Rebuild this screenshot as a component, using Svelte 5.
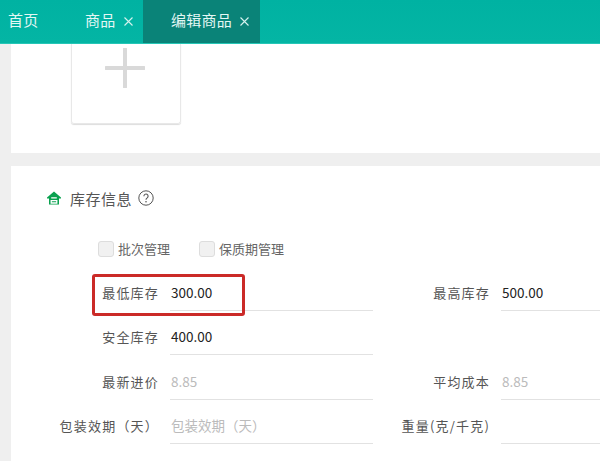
<script>
	const rows = [
		[
			{ label: '最低库存', value: '300.00', marked: true },
			{ label: '最高库存', value: '500.00' }
		],
		[{ label: '安全库存', value: '400.00' }, null],
		[
			{ label: '最新进价', value: '8.85', muted: true },
			{ label: '平均成本', value: '8.85', muted: true }
		],
		[
			{ label: '包装效期（天）', value: '包装效期（天）', muted: true, wide: true },
			{ label: '重量(克/千克)', value: '' }
		]
	];
</script>

<div class="page">
	<nav class="tabs">
		<div class="tab home">首页</div>
		<div class="tab">
			商品
			<svg class="close" width="9" height="9" viewBox="0 0 9 9">
				<path d="M.5.5l8 8M8.5.5l-8 8" stroke="#d5f2ee" stroke-width="1.1" />
			</svg>
		</div>
		<div class="tab active">
			编辑商品
			<svg class="close" width="9" height="9" viewBox="0 0 9 9">
				<path d="M.5.5l8 8M8.5.5l-8 8" stroke="#d5f2ee" stroke-width="1.1" />
			</svg>
		</div>
	</nav>

	<main class="content">
		<section class="card upload-card">
			<div class="upload">
				<svg width="40" height="40" viewBox="0 0 40 40">
					<path d="M20 1v38M1 20h38" stroke="#d9d9d9" stroke-width="4" stroke-linecap="round" />
				</svg>
			</div>
		</section>

		<section class="card stock">
			<h2 class="title">
				<svg class="home-icon" width="14" height="14" viewBox="0 0 14 14">
					<path d="M7 .5 14 6.5v1h-2v6H2v-6H0v-1z" fill="#0aa14f" />
					<path d="M4.2 6.8h5.6M4.2 9.6h5.6v2.4H4.2z" stroke="#fff" stroke-width="1.3" fill="none" />
				</svg>
				库存信息
				<svg class="help" width="16" height="16" viewBox="0 0 16 16">
					<circle cx="8" cy="8" r="7.2" fill="none" stroke="#555" />
					<path d="M5.9 6.2a2.1 2.1 0 1 1 3.3 1.7c-.8.5-1.2.9-1.2 1.8" fill="none" stroke="#555" stroke-width="1.1" />
					<circle cx="8" cy="11.7" r=".8" fill="#555" />
				</svg>
			</h2>

			<div class="checks">
				<label class="check"><span class="box"></span>批次管理</label>
				<label class="check"><span class="box"></span>保质期管理</label>
			</div>

			<div class="fields">
				{#each rows as row}
					<div class="row">
						{#each row as field}
							{#if field}
								<div class="field">
									<span class="label">{field.label}</span>
									<span class="input" class:muted={field.muted}>{field.value}</span>
									{#if field.marked}<span class="mark"></span>{/if}
								</div>
							{:else}
								<div class="field"></div>
							{/if}
						{/each}
					</div>
				{/each}
			</div>
		</section>
	</main>
</div>

<style>
	:global(body) {
		margin: 0;
	}

	.page {
		width: 600px;
		height: 461px;
		overflow: hidden;
		background: #efefef;
		font-family: "Noto Sans CJK SC", "Noto Sans", sans-serif;
		color: #555;
	}

	.tabs {
		display: flex;
		box-sizing: border-box;
		height: 44px;
		border-bottom: 1px solid #25c6b6;
		background: linear-gradient(#00b2a2, #04b5a4);
		color: #e4f7f4;
		font-size: 15px;
		letter-spacing: 0.25px;
		line-height: 40px;
	}

	.tab {
		display: flex;
		align-items: center;
		box-sizing: border-box;
		height: 43px;
		padding: 0 0 3px 28px;
		white-space: nowrap;
	}

	.tab:nth-child(2) {
		width: 86px;
	}

	.home {
		width: 57px;
		padding-left: 8px;
	}

	.active {
		width: 117px;
		background: #0a8378;
	}

	.close {
		margin-left: 8px;
		margin-top: 2px;
	}

	.content {
		display: flex;
		flex-direction: column;
		gap: 13px;
		padding-left: 11px;
	}

	.card {
		background: #fff;
	}

	.upload-card {
		height: 109px;
		padding-left: 60px;
	}

	.upload {
		display: flex;
		align-items: flex-start;
		justify-content: center;
		box-sizing: border-box;
		width: 110px;
		height: 80px;
		padding: 4px 2px 0 0;
		border: 1px solid #e8e8e8;
		border-top: 0;
		border-radius: 0 0 3px 3px;
		box-shadow: 0 1px 1px #ddd;
	}

	.stock {
		height: 295px;
		padding: 22px 0 0 36px;
	}

	.title {
		display: flex;
		align-items: center;
		height: 20px;
		margin: 0;
		font-size: 15px;
		font-weight: 400;
		letter-spacing: 0.5px;
		color: #555;
	}

	.home-icon {
		margin-right: 9px;
	}

	.help {
		margin-left: 6px;
	}

	.checks {
		display: flex;
		gap: 29px;
		margin: 32px 0 0 51px;
		font-size: 13px;
		line-height: 18px;
		color: #666;
	}

	.check {
		display: flex;
		align-items: center;
		gap: 4px;
	}

	.box {
		box-sizing: border-box;
		width: 16px;
		height: 16px;
		border: 1px solid #ddd;
		border-radius: 3px;
		background: #f1f1f1;
	}

	.fields {
		display: flex;
		flex-direction: column;
		gap: 4.4px;
		margin-top: 13px;
	}

	.row {
		display: flex;
		height: 40px;
	}

	.field {
		position: relative;
		display: flex;
		width: 331px;
		flex: none;
	}

	.label {
		box-sizing: border-box;
		width: 112px;
		font-size: 13px;
		letter-spacing: 1.2px;
		line-height: 43px;
		text-align: right;
		white-space: nowrap;
		color: #555;
	}

	.input {
		flex: none;
		box-sizing: border-box;
		width: 203px;
		height: 40px;
		margin-left: 11px;
		padding-left: 1px;
		border-bottom: 1px solid #e2e2e2;
		font-size: 13.5px;
		line-height: 43px;
		color: #222;
	}

	.input.muted {
		color: #bbb;
	}

	.mark {
		position: absolute;
		left: 45px;
		top: 3px;
		box-sizing: border-box;
		width: 153px;
		height: 42px;
		border: 3px solid #cb2a28;
		border-radius: 3px;
	}
</style>
